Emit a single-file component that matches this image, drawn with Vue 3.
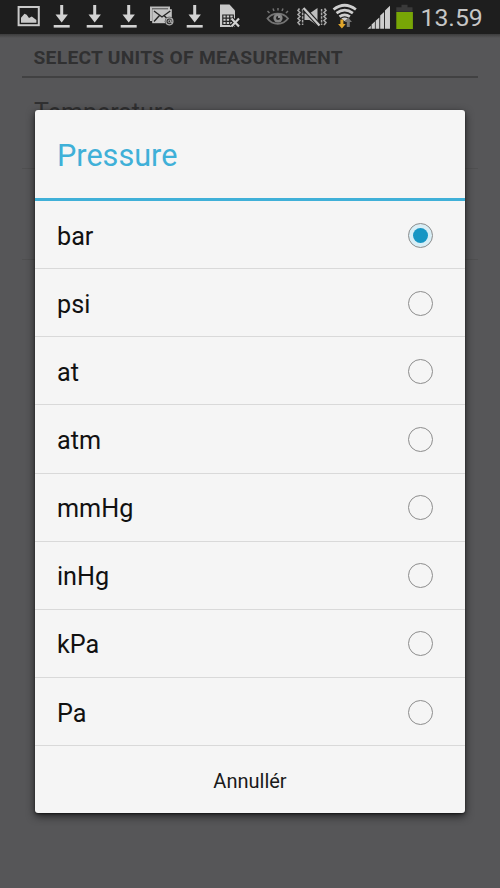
<template>
  <div class="screen">
    <header class="status-bar">
      <div class="notifications">
        <svg v-for="(icon, i) in notifications" :key="i" class="status-icon" viewBox="0 0 33.4 34">
          <g v-if="icon === 'picture'">
            <rect x="6.600" y="7" width="20.200" height="18.200" fill="none" stroke="#c9c9c9" stroke-width="2" />
            <path d="M9 22.800v-5l3.500-4 2.200 1 2.300 3.200 2.800-1.500 4.600 3.600v2.700z" fill="#c9c9c9" />
          </g>
          <g v-else-if="icon === 'download'" fill="#d2d2d2">
            <path d="M15.200 5h3v9.500h4.700l-6.200 8-6.200-8h4.700z" />
            <rect x="8.700" y="25" width="16" height="2.600" />
          </g>
          <g v-else-if="icon === 'mail'">
            <path d="M5 7.500h19v3M6 8v13" fill="none" stroke="#bdbdbd" stroke-width="2" />
            <rect x="7.200" y="9.200" width="19.600" height="14" fill="#c4c4c4" />
            <path d="M9 11l8 6 8.300-6M9 21.500l5.500-6M19 15.500l2.500 2.500" fill="none" stroke="#252525" stroke-width="1.400" />
            <circle cx="24.400" cy="21.300" r="4.600" fill="#303030" />
            <circle cx="24.400" cy="21.300" r="3.500" fill="none" stroke="#b0b0b0" stroke-width="1.200" />
            <circle cx="24.400" cy="21.300" r="1.300" fill="none" stroke="#b0b0b0" />
            <path d="M26 19.500v3.200h1.500" fill="none" stroke="#b0b0b0" />
          </g>
          <g v-else>
            <path d="M8 4.500h9.500l5.500 6v16.500h-15z" fill="#c9c9c9" />
            <path d="M10.800 15h10.500v9.500h-10.500zM10.800 18.200h10.500M10.800 21.400h10.500M14.200 15v9.500M17.700 15v9.500" fill="none" stroke="#252525" stroke-width="1.200" />
            <path d="M19.500 18.500l7.500 8M27 18.500l-7.500 8" stroke="#1e1e1e" stroke-width="4.500" />
            <path d="M19.500 18.500l7.500 8M27 18.500l-7.500 8" stroke="#d2d2d2" stroke-width="2.200" />
          </g>
        </svg>
      </div>
      <div class="system">
        <!-- smart stay -->
        <svg class="status-icon" viewBox="0 0 33.4 34">
          <g fill="none" stroke="#737373">
            <path d="M6.500 18.500c5-6.500 15.500-6.500 20.500 0c-5 7-15.500 7-20.500 0z" stroke-width="1.900" />
            <path d="M8.500 13l-2-2M13 11l-1-2.500M17 10.500V8M21 11l1-2.500M25 13l2-2" stroke-width="1.500" />
          </g>
          <circle cx="17" cy="18" r="4.600" fill="#858585" />
          <circle cx="17" cy="18" r="2" fill="#252525" />
          <circle cx="18" cy="17" r="1" fill="#b0b0b0" />
        </svg>
        <!-- vibrate -->
        <svg class="status-icon" viewBox="0 0 33.4 34">
          <g fill="none" stroke="#a8a8a8" stroke-width="1.600">
            <path d="M4.500 8.500l-1.500 2 2 2-2 2 2 2-2 2 2 2-2 2 2 2.500" />
            <path d="M29.500 8.500l1.500 2-2 2 2 2-2 2 2 2-2 2 2 2-2 2.500" />
          </g>
          <path d="M7.600 9v16M26.600 9v16" stroke="#a8a8a8" stroke-width="1.500" stroke-dasharray="2.600 1" />
          <path d="M9.500 13.500h5l8-5.500v17.500l-8-5.500h-5z" fill="#bebebe" />
          <path d="M9 8.500l15.500 17" stroke="#222" stroke-width="4.500" />
          <path d="M8.500 8l16 17.500" stroke="#c8c8c8" stroke-width="2.300" />
        </svg>
        <!-- wifi -->
        <svg class="status-icon" viewBox="0 0 33.4 34">
          <g fill="none" stroke="#cecece" stroke-width="2.700">
            <path d="M5.500 9.500q11.200-8.500 22.400 0M8.500 13.200q8.200-6 16.400 0M11.500 16.700q5.200-3.700 10.400 0" />
          </g>
          <path d="M13.300 18.600q3.400-2 6.800 0l-3.400 2.700z" fill="#cecece" />
          <path d="M12.400 19.500h3v4.500h2.300l-3.800 4.500-3.800-4.500h2.300z" fill="#e0a62c" />
          <path d="M18.800 27v-5h-2.200l3.700-4.500 3.700 4.500h-2.200v5z" fill="#747474" />
        </svg>
        <!-- signal -->
        <svg class="status-icon" viewBox="0 0 33.4 34">
          <g fill="#cecece">
            <path d="M5.500 28.800l3.300-3v3zM9.600 28.800v-4.200l3.300-3v7.200zM13.700 28.800v-8l3.600-3.200v11.200zM18.200 28.800V15.500l3.900-3.500v16.800zM23 28.800V10.500l5-4.700v23z" />
          </g>
        </svg>
        <!-- battery -->
        <svg class="battery" viewBox="0 0 19 34">
          <path d="M6.500 4.800h6v2.500h5v4.500H1.300V7.300h5.200z" fill="#3a3a3a" />
          <rect x="1.300" y="12" width="16.600" height="17" fill="#78a606" />
        </svg>
        <span class="clock">13.59</span>
      </div>
    </header>

    <main class="preferences">
      <h2>SELECT UNITS OF MEASUREMENT</h2>
      <div class="preference">Temperature</div>
      <div class="preference"></div>
    </main>

    <div class="dialog">
      <h1>Pressure</h1>
      <ul class="options">
        <li v-for="unit in units" :key="unit" @click="selected = unit">
          <span>{{ unit }}</span>
          <i class="radio" :class="{ checked: unit === selected }"></i>
        </li>
      </ul>
      <button class="cancel-btn">Annullér</button>
    </div>
  </div>
</template>

<script setup>
import { ref } from 'vue'

const notifications = ['picture', 'download', 'download', 'download', 'mail', 'download', 'sim']
const units = ['bar', 'psi', 'at', 'atm', 'mmHg', 'inHg', 'kPa', 'Pa']
const selected = ref('bar')
</script>

<style>
body {
  margin: 0;
}
</style>

<style scoped>
.screen {
  position: relative;
  width: 500px;
  height: 888px;
  overflow: hidden;
  background: #565658;
  font-family: Roboto, "Noto Sans", sans-serif;
}

.status-bar {
  display: flex;
  justify-content: space-between;
  height: 34px;
  padding: 0 18px 0 11.5px;
  background: #1e1e1e;
}

.notifications,
.system {
  display: flex;
}

.status-icon {
  width: 33.4px;
  height: 34px;
}

.battery {
  width: 19px;
  height: 34px;
}

.clock {
  width: 61px;
  margin-left: 7px;
  color: #c6c6c6;
  font-size: 24.8px;
  line-height: 35px;
  text-indent: -0.5px;
  white-space: nowrap;
}

.preferences {
  padding: 0 22px;
  background: linear-gradient(#3c3c3d, #565658 4px);
}

.preferences h2 {
  height: 41.5px;
  margin: 0;
  padding-left: 11.5px;
  border-bottom: 2px solid #414142;
  color: #303031;
  font-size: 19.2px;
  font-weight: 700;
  letter-spacing: 0.3px;
  line-height: 47px;
}

.preference {
  height: 90px;
  padding-left: 12px;
  border-bottom: 1px solid #4f4f50;
  color: #303031;
  font-size: 25px;
  line-height: 70px;
}

.dialog {
  position: absolute;
  top: 110px;
  left: 35px;
  display: flex;
  flex-direction: column;
  width: 430px;
  height: 702.5px;
  border-radius: 3px;
  background: #f5f5f5;
  box-shadow: 0 3px 9px rgba(0, 0, 0, 0.65), 0 1px 2px rgba(0, 0, 0, 0.5);
}

.dialog h1 {
  height: 88px;
  margin: 0;
  padding-left: 22px;
  border-bottom: 3px solid #3fb0d8;
  color: #3fb0d8;
  font-size: 30.6px;
  font-weight: 400;
  line-height: 92px;
}

.options {
  margin: 0;
  padding: 0;
  list-style: none;
}

.options li {
  display: flex;
  align-items: center;
  justify-content: space-between;
  box-sizing: border-box;
  height: 68.15px;
  padding: 1px 32px 0 22px;
  border-bottom: 1px solid #d9d9d9;
  color: #111;
  font-size: 25.2px;
}

.options span {
  padding-top: 2px;
}

.radio {
  display: flex;
  align-items: center;
  justify-content: center;
  box-sizing: border-box;
  width: 25px;
  height: 25px;
  border: 1.5px solid #8d8d8d;
  border-radius: 50%;
}

.radio.checked {
  background: #d8eef6;
}

.radio.checked::after {
  width: 15px;
  height: 15px;
  border-radius: 50%;
  background: #1696c4;
  content: "";
}

.cancel-btn {
  flex: 1;
  padding: 3px 0 0;
  border: none;
  background: none;
  color: #1a1a1a;
  font-family: inherit;
  font-size: 20px;
}
</style>
